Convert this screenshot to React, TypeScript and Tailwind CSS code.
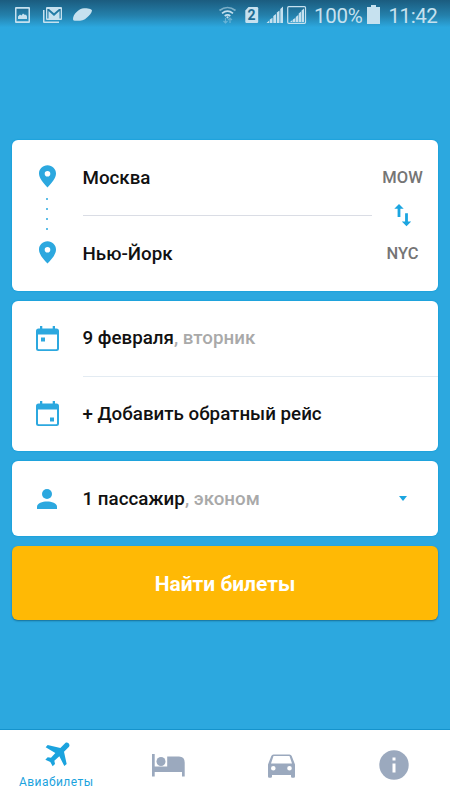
import type { ReactNode } from "react";

function StatusBar() {
    return (
        <header className="flex h-[34px] items-start bg-linear-to-b from-[#1b5c7f] via-[#2480ab] via-45% to-[#2ca8df] to-80% text-[#c6e1ef]">
            <svg className="h-[34px] w-[310px] shrink-0" viewBox="0 0 310 34" fill="currentColor">
                {/* Picture */}
                <path
                    fillRule="evenodd"
                    d="M16 7h13q1 0 1 1v14q0 1-1 1H16q-1 0-1-1V8q0-1 1-1zM16.500 8.700v12.600h12V8.700zM18 19v-2.500l2-2 1.500 1 1.500-2 2 1.500 1-.5 1 2V19z"
                />
                {/* Mail */}
                <path d="M43 10h1.500v11.500H59V23H44q-1 0-1-1z" />
                <path
                    fillRule="evenodd"
                    d="M47 7h14q1 0 1 1v11q0 1-1 1H47q-1 0-1-1V8q0-1 1-1zM47.300 9v9.500h1.200V11l5.500 5 5.500-5v7.500h1.200V9h-1.700L54 13.300 49 9z"
                />
                {/* Planet */}
                <path d="M73 19c0-5 6-10.500 11-10.800 3 0 8 .6 8 2.300 0 2.500-3 5-5 7-3 3-7 3.500-11 3.300-2 0-3-.3-3-1.800z" />
                {/* Wi-Fi */}
                <g fill="none" stroke="currentColor" strokeWidth="1.700">
                    <path d="M219.500 10.500q8-6 16 0" opacity=".55" />
                    <path d="M222 13.300q5.500-4.300 11 0M224.700 16q2.800-2.200 5.600 0" />
                    <path d="M225.500 18v5m-2-2 2 2 2-2M230 23v-5m-2 2 2-2 2 2" opacity=".4" strokeWidth="1.200" />
                </g>
                <circle cx="227.500" cy="17.300" r="1.100" />
                {/* SIM */}
                <path d="M248.500 7H257q1.200 0 1.200 1.200v13.600q0 1.200-1.200 1.200h-10.500q-1.200 0-1.200-1.200V10.500z" />
                <text
                    x="251.600"
                    y="20"
                    textAnchor="middle"
                    className="fill-[#206d94] font-['Roboto'] text-[14px] font-bold"
                >
                    2
                </text>
                {/* Signal */}
                <path d="M266.500 23l2.700-2.500V23zM269.800 19.500l2.700-1.800V23h-2.700zM273.300 16l2.700-2V23h-2.700zM276.800 12.500l2.700-2V23h-2.700zM280.300 9l2.700-2.500V23h-2.700z" />
                <rect x="287.700" y="6.700" width="17.800" height="16.600" rx="1" fill="none" stroke="currentColor" strokeWidth="1.200" />
                <path d="M290 22l2.400-2v2zM292.900 19.500l2.400-1.500v4h-2.400zM295.800 17l2.400-2v7h-2.400zM298.700 13.500l2.400-2V22h-2.400zM301.600 10.500l2.400-2V22h-2.400z" />
            </svg>
            <span className="ml-[4px] mt-[4px] w-[48px] shrink-0 whitespace-nowrap text-[20.500px] leading-6 tracking-[-0.3px]">
                100%
            </span>
            <svg className="ml-[5px] mt-[5px] h-[19px] w-[13px] shrink-0" viewBox="0 0 13 19" fill="currentColor">
                <path d="M4 0h5v2h4v17H0V2h4z" />
            </svg>
            <span className="ml-[8.500px] mt-[4px] whitespace-nowrap text-[20.500px] leading-6 tracking-[-0.45px]">
                11:42
            </span>
        </header>
    );
}

function Card({ children }: { children: ReactNode }) {
    return (
        <section className="overflow-hidden rounded-[6px] bg-white shadow-[0_0_1px_1px_#1fa2dc]">
            {children}
        </section>
    );
}

function Row({ icon, children }: { icon: ReactNode; children: ReactNode }) {
    return (
        <div className="flex h-[75px] items-center">
            <div className="flex w-[70.500px] shrink-0 justify-center text-[#2ca8df]">{icon}</div>
            <div className="flex flex-1 items-center">{children}</div>
        </div>
    );
}

function PinIcon() {
    return (
        <svg className="h-[23px] w-[18px]" viewBox="0 0 18 23" fill="currentColor">
            <path
                fillRule="evenodd"
                d="M9.500 .3C4.700.3 1 4 1 8.600c0 4.900 4.200 9.300 8.500 14 4.300-4.700 8.500-9.100 8.500-14C18 4 14.300.3 9.500.3zM9.500 5.900a2.800 2.800 0 1 1 0 5.600 2.800 2.800 0 0 1 0-5.600z"
            />
        </svg>
    );
}

function CalendarIcon({ end = false }: { end?: boolean }) {
    return (
        <svg className="h-[25px] w-[23px]" viewBox="0 0 23 25" fill="currentColor">
            <path
                fillRule="evenodd"
                d="M4 0h2.300v2.500h10.400V0H19v2.500h1.500Q23 2.500 23 5v17.500q0 2.500-2.500 2.500h-18Q0 25 0 22.500V5Q0 2.500 2.500 2.500H4zM2 8.500v14q0 .7.700.7h17.600q.7 0 .7-.7v-14z"
            />
            <rect x={end ? 14 : 5} y={end ? 16.500 : 11.500} width="4" height="4" />
        </svg>
    );
}

function Route() {
    return (
        <div className="flex h-[151px] text-[#2ca8df]">
            <div className="flex w-[70.500px] flex-col items-center pt-[25px]">
                <PinIcon />
                <div className="flex flex-col gap-[8px] pt-[10px] pb-[11px]">
                    <i className="size-[2px] rounded-full bg-current" />
                    <i className="size-[2px] rounded-full bg-current" />
                    <i className="size-[2px] rounded-full bg-current" />
                    <i className="size-[2px] rounded-full bg-current" />
                </div>
                <PinIcon />
            </div>
            <div className="flex flex-1 flex-col text-[#111]">
                <div className="flex h-[75px] items-center pt-[2px]">Москва</div>
                <div className="h-px bg-[#dadde5]" />
                <div className="flex h-[75px] items-center pt-[2px]">Нью-Йорк</div>
            </div>
            <div className="flex w-[66px] flex-col items-center pr-[5px] pt-[26px] text-[16.500px] leading-6 text-[#757575]">
                <span>MOW</span>
                <svg className="mt-[13px] mb-[15px] h-[24px] w-[18px] text-[#1ba5e0]" viewBox="0 0 18 24" fill="currentColor">
                    <path d="M5 1l4.700 4.700H6.400v8.300H3.600V5.700H.300zM12.500 23.300L7.800 18.500h3.300V10.300h2.800v8.200H17.200z" />
                </svg>
                <span>NYC</span>
            </div>
        </div>
    );
}

function TabBar() {
    return (
        <nav className="grid h-[70px] grid-cols-4 bg-white text-[#9ba9be] shadow-[0_-1px_0_#1593cc]">
            <div className="flex flex-col items-center pt-[12px] text-[#1ba3de]">
                <svg className="ml-[2px] h-[25px] w-[25px]" viewBox="0 0 75 75" fill="currentColor">
                    <path d="M61 3C67-2 77 7 72 14L57 29 65 66 58 72 43 43 28 56 30 66 23 73 16 60 1 53 8 46 18 47 31 33 2 16 8 9 46 18Z" />
                </svg>
                <span className="mt-[7px] text-[12px] leading-4 tracking-[0.45px]">Авиабилеты</span>
            </div>
            <div className="flex items-center justify-center">
                <svg className="h-[23px] w-[33px]" viewBox="0 0 33 23" fill="currentColor">
                    <path d="M0 0h2.700v12.500h12.500V2.500h11.800Q32.700 2.500 32.700 8.500V22.500h-2.700V18H2.700v4.500H0z" />
                    <circle cx="9" cy="7.500" r="4.500" />
                </svg>
            </div>
            <div className="flex items-center justify-center pt-[2px]">
                <svg className="h-[24px] w-[27px]" viewBox="0 0 27 24" fill="currentColor">
                    <path
                        fillRule="evenodd"
                        d="M5.500.5h16q1.700 0 2.200 1.500L27 10.500v12q0 1.200-1.200 1.200H24.200q-1.200 0-1.200-1.200V21H4v1.500Q4 23.700 2.800 23.700h-1.600Q0 23.700 0 22.500v-12L3.300 2Q3.800.5 5.500.5zM5.500 2L3 9.500h21l-2.500-7.500zM5.300 12a2.300 2.300 0 1 0 0 4.600 2.300 2.300 0 0 0 0-4.600zm16.200 0a2.300 2.300 0 1 0 0 4.600 2.300 2.300 0 0 0 0-4.600z"
                    />
                </svg>
            </div>
            <div className="flex items-center justify-center">
                <svg className="size-[30px]" viewBox="0 0 30 30">
                    <circle cx="15" cy="15" r="14.700" fill="currentColor" />
                    <path fill="#fff" d="M13.500 7.500h3v3h-3zM13.500 13.500h3v9h-3z" />
                </svg>
            </div>
        </nav>
    );
}

export default function App() {
    return (
        <div className="flex h-[800px] w-[450px] flex-col overflow-hidden bg-[#2ca8df] font-['Roboto',sans-serif]">
            <StatusBar />
            <main className="flex flex-1 flex-col gap-[10px] px-[12px] pt-[106px] text-[18.750px] font-medium text-[#111]">
                <Card>
                    <Route />
                </Card>
                <Card>
                    <Row icon={<CalendarIcon />}>
                        <span>
                            9 февраля<span className="text-[#a9a9a9]">, вторник</span>
                        </span>
                    </Row>
                    <div className="-mb-px ml-[71px] h-px bg-[#e3ebf2]" />
                    <Row icon={<CalendarIcon end />}>
                        <span className="pt-[2px]">+ Добавить обратный рейс</span>
                    </Row>
                </Card>
                <Card>
                    <Row
                        icon={
                            <svg className="h-[20px] w-[20px]" viewBox="0 0 20 20" fill="currentColor">
                                <circle cx="10" cy="5" r="5" />
                                <path d="M10 12.500c-4.500 0-10 1.900-10 5V20h20v-2.500c0-3.100-5.500-5-10-5z" />
                            </svg>
                        }
                    >
                        <span className="flex-1 pt-px">
                            1 пассажир<span className="text-[#a9a9a9]">, эконом</span>
                        </span>
                        <svg className="mr-[31px] h-[5px] w-[8px] text-[#1ba5e0]" viewBox="0 0 8 5" fill="currentColor">
                            <path d="M0 0h8L4 5z" />
                        </svg>
                    </Row>
                </Card>
                <button className="h-[73.500px] rounded-[6px] bg-[#ffb905] pt-[4px] text-[21px] font-bold text-white shadow-[0_1px_2px_#176e96]">
                    Найти билеты
                </button>
            </main>
            <TabBar />
        </div>
    );
}
